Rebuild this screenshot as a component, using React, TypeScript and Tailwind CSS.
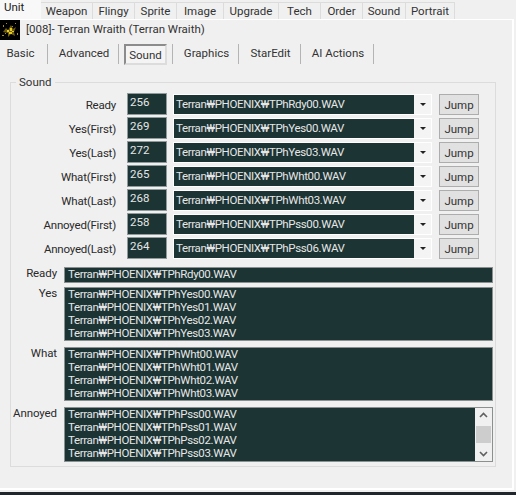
const MAIN_TABS = [
  { label: "Weapon", w: "w-[52px]" },
  { label: "Flingy", w: "w-[42px]" },
  { label: "Sprite", w: "w-[42px]" },
  { label: "Image", w: "w-[47px]" },
  { label: "Upgrade", w: "w-[55px]" },
  { label: "Tech", w: "w-[42px]" },
  { label: "Order", w: "w-[42px]" },
  { label: "Sound", w: "w-[43px]" },
  { label: "Portrait", w: "w-[49px]" },
];

const SUB_TABS = [
  { label: "Basic", w: "w-[48px] pr-[6px]" },
  { label: "Advanced", w: "w-[71px] pl-[2px]" },
  { label: "Sound", w: "w-[54px]", active: true },
  { label: "Graphics", w: "w-[66px] pl-[2px]" },
  { label: "StarEdit", w: "w-[62px] pl-[2px]" },
  { label: "AI Actions", w: "w-[73px] pl-[2px]" },
];

const ROWS = [
  { label: "Ready", id: "256", file: "Terran₩PHOENIX₩TPhRdy00.WAV" },
  { label: "Yes(First)", id: "269", file: "Terran₩PHOENIX₩TPhYes00.WAV" },
  { label: "Yes(Last)", id: "272", file: "Terran₩PHOENIX₩TPhYes03.WAV" },
  { label: "What(First)", id: "265", file: "Terran₩PHOENIX₩TPhWht00.WAV" },
  { label: "What(Last)", id: "268", file: "Terran₩PHOENIX₩TPhWht03.WAV" },
  { label: "Annoyed(First)", id: "258", file: "Terran₩PHOENIX₩TPhPss00.WAV" },
  { label: "Annoyed(Last)", id: "264", file: "Terran₩PHOENIX₩TPhPss06.WAV" },
];

const LISTS = [
  { label: "Ready", files: ["TPhRdy00"], box: "mt-0 h-[16px]" },
  { label: "Yes", files: ["TPhYes00", "TPhYes01", "TPhYes02", "TPhYes03"], box: "mt-[4px] h-[54px]" },
  { label: "What", files: ["TPhWht00", "TPhWht01", "TPhWht02", "TPhWht03"], box: "mt-[6px] h-[54px]" },
  { label: "Annoyed", files: ["TPhPss00", "TPhPss01", "TPhPss02", "TPhPss03"], box: "mt-[6px] h-[55px]", scroll: true },
];

function WraithIcon() {
  return (
    <svg width="20" height="20" viewBox="0 0 20 20" className="shrink-0 bg-black">
      <path d="M3 12 L6 8 L8 10 L11 5 L13 9 L16 7 L14 12 L15 16 L11 14 L8 17 L8 13 Z" fill="#6e5c10" />
      <path d="M7 10h2v2H7zM10 8h2v3h-2zM9 12h3v2H9zM12 11h2v1h-2z" fill="#e6cc20" />
      <path d="M3 5h1v2H3zM15 3h1v1h-1zM2 15h2v1H2zM17 13h1v2h-1zM6 3h1v1H6zM5 13h1v1H5zM12 6h1v1h-1z" fill="#a89018" />
    </svg>
  );
}

function SoundRow({ label, id, file }: { label: string; id: string; file: string }) {
  return (
    <div className="flex h-[24px] items-start">
      <div className="w-[105px] pt-[3px] text-right leading-[18px] tracking-[-0.2px] text-[#2a2a2a]">{label}</div>
      <div className="ml-[11px] h-[22px] w-[40px] border border-[#8f9a9a] bg-[#1c3434] pl-[2px] leading-[16px] text-[#e6e6e6]">
        {id}
      </div>
      <div className="ml-[6px] mt-[1px] flex h-[21px] w-[259px] border border-white bg-[#f4f4f4]">
        <div className="w-[240px] bg-[#1c3434] pl-[2px] leading-[19px] tracking-[-0.35px] text-[#e6e6e6]">{file}</div>
        <div className="flex flex-1 items-center justify-center">
          <div className="h-0 w-0 border-x-[3px] border-t-[3px] border-x-transparent border-t-[#222]" />
        </div>
      </div>
      <button className="ml-[7px] mt-[1px] h-[21px] w-[40px] border border-[#adadad] bg-[#e1e1e1] leading-[18px] text-[#333]">
        Jump
      </button>
    </div>
  );
}

function ListBox({ label, files, box, scroll }: { label: string; files: string[]; box: string; scroll?: boolean }) {
  return (
    <div className={`flex items-start ${box}`}>
      <div className="w-[46px] -mt-[2px] text-right leading-[16px] tracking-[-0.1px] text-[#2a2a2a]">{label}</div>
      <div className="ml-[7px] flex h-full w-[429px] border border-[#8a9090] bg-[#1c3434]">
        <div className="flex-1 pl-[3px] tracking-[-0.35px] text-[#e6e6e6]">
          {files.map((f) => (
            <div key={f} className="h-[13px] leading-[13px]">
              Terran₩PHOENIX₩{f}.WAV
            </div>
          ))}
        </div>
        {scroll && (
          <div className="flex w-[17px] flex-col items-center justify-between bg-[#f0f0f0] py-[4px] text-[#606060]">
            <svg width="9" height="6" viewBox="0 0 9 6" fill="none" stroke="currentColor" strokeWidth="1.6">
              <path d="M1 5 L4.5 1.5 L8 5" />
            </svg>
            <div className="h-[17px] w-[15px] bg-[#cdcdcd]" />
            <svg width="9" height="6" viewBox="0 0 9 6" fill="none" stroke="currentColor" strokeWidth="1.6">
              <path d="M1 1 L4.5 4.5 L8 1" />
            </svg>
          </div>
        )}
      </div>
    </div>
  );
}

export default function App() {
  return (
    <div className="flex h-[495px] w-[516px] flex-col overflow-hidden bg-[#f0f0f0] font-['Roboto','Liberation_Sans','Noto_Sans_CJK_KR',sans-serif] text-[11.5px] text-[#333]">
      {/* top tab strip */}
      <div className="relative z-10 flex h-[19px] shrink-0 items-end">
        <div className="h-[19px] w-[41px] bg-[#f8f8f8] pl-[4px] leading-[15px] text-[#222]">Unit</div>
        {MAIN_TABS.map((t) => (
          <div
            key={t.label}
            className={`h-[17px] ${t.w} border-r border-t border-[#dcdcdc] bg-[#f0f0f0] text-center leading-[17px]`}
          >
            {t.label}
          </div>
        ))}
      </div>

      <div className="mr-[2px] flex-1 border-b-2 border-r-2 border-t border-white">
        <div className="flex h-[20px] items-center gap-[6px]">
          <WraithIcon />
          <span>[008]- Terran Wraith (Terran Wraith)</span>
        </div>

        {/* sub tabs */}
        <div className="mt-[4px] flex h-[20px]">
          {SUB_TABS.map((t) => (
            <div key={t.label} className={`flex h-[20px] items-center ${t.w} border-r border-[#b4b4b4]`}>
              {t.active ? (
                <div className="ml-[5px] h-[21px] w-[43px] border-2 border-b-[#dcdcdc] border-l-[#8c8c8c] border-r-[#dcdcdc] border-t-[#8c8c8c] bg-[#f4f4f4] text-center leading-[19px]">
                  {t.label}
                </div>
              ) : (
                <div className="w-full text-center">{t.label}</div>
              )}
            </div>
          ))}
        </div>

        {/* group box */}
        <div className="relative ml-[10px] mt-[18px] h-[385px] w-[486px] border border-[#dcdcdc] pt-[10px]">
          <span className="absolute -top-[9px] left-[5px] bg-[#f0f0f0] px-[3px] leading-[16px]">Sound</span>
          <div className="flex flex-col">
            {ROWS.map((r) => (
              <SoundRow key={r.label} {...r} />
            ))}
          </div>
          <div className="mt-[6px] flex flex-col">
            {LISTS.map((l) => (
              <ListBox key={l.label} {...l} />
            ))}
          </div>
        </div>
      </div>
      <div className="mt-[2px] h-[3px] shrink-0 bg-[#20262b]" />
    </div>
  );
}
